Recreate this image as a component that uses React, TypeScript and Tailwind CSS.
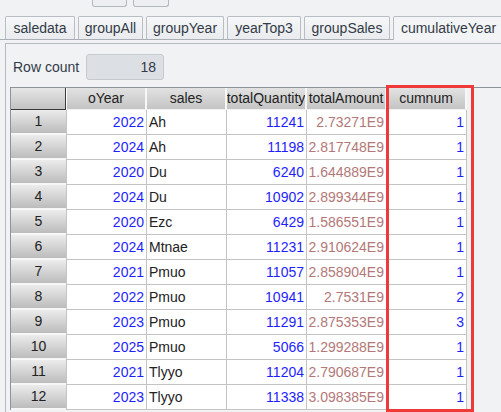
import React from 'react';

// tab strip: label + width in px
const tabs = [
  { label: 'saledata', w: 'w-[70px]' },
  { label: 'groupAll', w: 'w-[65px]' },
  { label: 'groupYear', w: 'w-[78px]' },
  { label: 'yearTop3', w: 'w-[74px]' },
  { label: 'groupSales', w: 'w-[86px]' },
  { label: 'cumulativeYear', w: 'w-[111px]', active: true },
];

const columns = ['oYear', 'sales', 'totalQuantity', 'totalAmount', 'cumnum'];

const rows: [number, string, number, string, number][] = [
  [2022, 'Ah', 11241, '2.73271E9', 1],
  [2024, 'Ah', 11198, '2.817748E9', 1],
  [2020, 'Du', 6240, '1.644889E9', 1],
  [2024, 'Du', 10902, '2.899344E9', 1],
  [2020, 'Ezc', 6429, '1.586551E9', 1],
  [2024, 'Mtnae', 11231, '2.910624E9', 1],
  [2021, 'Pmuo', 11057, '2.858904E9', 1],
  [2022, 'Pmuo', 10941, '2.7531E9', 2],
  [2023, 'Pmuo', 11291, '2.875353E9', 3],
  [2025, 'Pmuo', 5066, '1.299288E9', 1],
  [2021, 'Tlyyo', 11204, '2.790687E9', 1],
  [2023, 'Tlyyo', 11338, '3.098385E9', 1],
];

const cell = 'w-[80px] h-full border-r border-[#c4c4c4] flex items-center px-[2px] overflow-hidden whitespace-nowrap';

export default function App() {
  return (
    <div className="relative w-[501px] h-[412px] overflow-hidden bg-[#f0f2f4] text-[14px] text-[#222] font-['Liberation_Sans',Arial,sans-serif]">
      {/* toolbar buttons, cut off at the top */}
      <div className="flex gap-[6px] pl-[92px] h-[7px]">
        <div className="w-[35px] h-[7px] border border-t-0 border-[#b3b8bd] rounded-b-[3px] bg-[#eceef1]" />
        <div className="w-[36px] h-[7px] border border-t-0 border-[#b3b8bd] rounded-b-[3px] bg-[#eceef1]" />
      </div>

      {/* tabs */}
      <div className="mt-[9px] flex items-end gap-[3px] pl-[5px] h-[24px] border-b border-[#a9afb5]">
        {tabs.map((t) => (
          <div
            key={t.label}
            className={`${t.w} shrink-0 flex items-center justify-center border border-b-0 border-[#b9bec4] rounded-t-[2px] text-[#333b47] ${
              t.active ? 'h-[24px] bg-[#f3f4f6] -mb-px' : 'h-[23px] bg-gradient-to-b from-[#f6f7f8] to-[#e9ebee]'
            }`}
          >
            {t.label}
          </div>
        ))}
      </div>

      {/* panel */}
      <div className="mt-[3px] ml-[5px] border-t border-l border-[#b5bac0] h-[400px]">
        <div className="flex items-center h-[26px] mt-[10px] pl-[7px]">
          <span className="w-[73px] text-[#333b47]">Row count</span>
          <div className="w-[78px] h-[26px] bg-[#dcdfe3] border border-[#c6cacf] rounded-[3px] flex items-center justify-end pr-[7px] text-[#333b47]">
            18
          </div>
        </div>

        {/* table viewport */}
        <div className="mt-[7px] ml-[4px] border-t border-l border-[#8e9399]">
          {/* header row */}
          <div className="flex h-[22px]">
            <div className="w-[55px] h-full bg-gradient-to-b from-[#e6e6e6] to-[#c2c2c2] border-r border-b border-[#3a3a3a]" />
            <div className="w-[1px] h-full bg-white" />
            {columns.map((c) => (
              <div
                key={c}
                className="w-[80px] h-[21px] bg-gradient-to-b from-[#e2e2e2] to-[#c4c4c4] border-r-2 border-[#f7f7f7] flex items-center justify-center overflow-hidden whitespace-nowrap"
              >
                {c}
              </div>
            ))}
          </div>

          {/* data rows */}
          {rows.map((r, i) => (
            <div key={i} className="flex h-[25px]">
              <div className="w-[55px] h-full bg-gradient-to-b from-[#ececec] to-[#bcbcbc] border-b-2 border-[#f7f7f7] flex items-center justify-center">
                {i + 1}
              </div>
              <div className="w-[1px] h-full bg-[#c4c4c4]" />
              <div className="flex h-full bg-white border-b border-[#c4c4c4]">
                <div className={`${cell} justify-end text-[#1e1eff]`}>{r[0]}</div>
                <div className={`${cell} justify-start`}>{r[1]}</div>
                <div className={`${cell} justify-end text-[#1e1eff]`}>{r[2]}</div>
                <div className={`${cell} justify-end text-[#b37878]`}>{r[3]}</div>
                <div className={`${cell} justify-end text-[#1e1eff]`}>{r[4]}</div>
              </div>
            </div>
          ))}
        </div>
      </div>

      {/* red highlight around cumnum */}
      <div className="absolute left-[386px] top-[85px] w-[88px] h-[327px] border-[3px] border-[#f03a3a] pointer-events-none" />
    </div>
  );
}
